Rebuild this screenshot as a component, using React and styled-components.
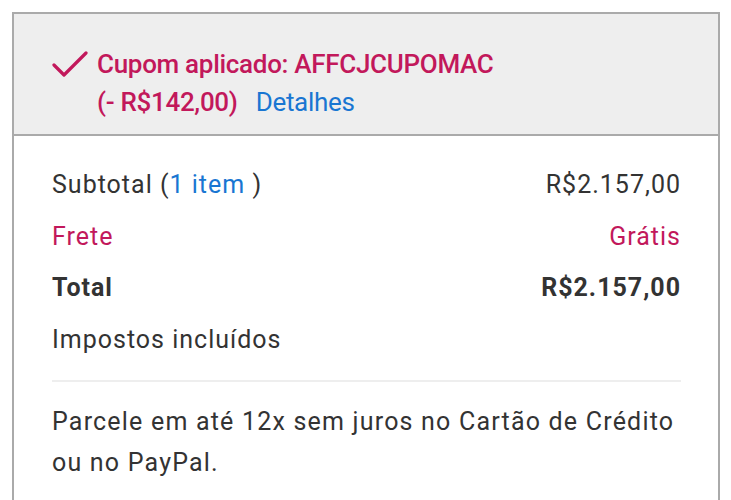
import React from 'react'
import styled, { createGlobalStyle } from 'styled-components'

const GlobalStyle = createGlobalStyle`
  body {
    margin: 0;
    background: #ffffff;
    font-family: Roboto, "Liberation Sans", sans-serif;
  }
`

const Page = styled.div`
  padding: 12px 0 0 12px;
  height: 500px;
  box-sizing: border-box;
  overflow: hidden;
`

const Summary = styled.div`
  width: 708px;
  box-sizing: border-box;
  border: 2px solid #aaaaaa;
  border-bottom: none;
  min-height: 600px;
`

const CouponBar = styled.div`
  display: flex;
  align-items: flex-start;
  gap: 9px;
  background: #eeeeee;
  border-bottom: 2px solid #aaaaaa;
  padding: 31px 38px 13px 38px;
`

const CheckIcon = styled.svg`
  width: 36px;
  height: 30px;
  margin-top: 5px;
  flex-shrink: 0;
`

const CouponText = styled.div`
  font-size: 26px;
  font-weight: 500;
  line-height: 38px;
  letter-spacing: -0.3px;
  color: #c2185b;
`

const Link = styled.a`
  color: #1976d2;
  font-weight: 400;
  text-decoration: none;
  margin-left: ${(p) => p.$gap || 0}px;
`

const Body = styled.div`
  padding: 23px 37px 0 38px;
  color: #333333;
`

const Row = styled.div`
  display: flex;
  justify-content: space-between;
  align-items: center;
  font-size: 25px;
  line-height: 51.5px;
  letter-spacing: 1px;
  font-weight: ${(p) => (p.$bold ? 700 : 400)};
  color: ${(p) => (p.$accent ? '#c2185b' : '#333333')};
`

const Divider = styled.hr`
  border: none;
  border-top: 2px solid #eeeeee;
  margin: 15px 0 19px 0;
`

const Note = styled.p`
  margin: 0;
  font-size: 25px;
  line-height: 41px;
  letter-spacing: 1.2px;
  color: #333333;
`

export default function App() {
  return (
    <>
      <GlobalStyle />
      <Page>
        <Summary>
          <CouponBar>
            <CheckIcon viewBox="0 0 36 30">
              <path
                d="M2 15 L12 25 L34 3"
                fill="none"
                stroke="#c2185b"
                strokeWidth="3.2"
                strokeLinecap="round"
                strokeLinejoin="round"
              />
            </CheckIcon>
            <CouponText>
              Cupom aplicado: AFFCJCUPOMAC
              <br />
              (- R$142,00)<Link href="#" $gap={18}>Detalhes</Link>
            </CouponText>
          </CouponBar>
          <Body>
            <Row>
              <span>
                Subtotal (<Link href="#">1 item </Link>)
              </span>
              <span>R$2.157,00</span>
            </Row>
            <Row $accent>
              <span>Frete</span>
              <span>Grátis</span>
            </Row>
            <Row $bold>
              <span>Total</span>
              <span>R$2.157,00</span>
            </Row>
            <Row>
              <span>Impostos incluídos</span>
            </Row>
            <Divider />
            <Note>
              Parcele em até 12x sem juros no Cartão de Crédito
              <br />
              ou no PayPal.
            </Note>
          </Body>
        </Summary>
      </Page>
    </>
  )
}
